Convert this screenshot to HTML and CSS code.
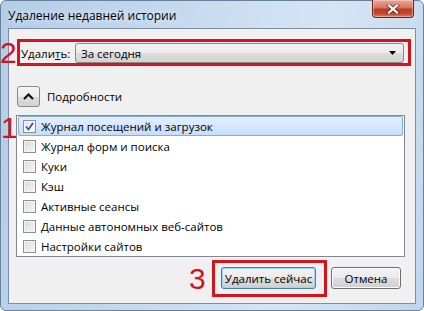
FILE: index.html
```html
<!DOCTYPE html>
<html lang="ru">
<head>
<meta charset="utf-8">
<title>Удаление недавней истории</title>
<link rel="stylesheet" href="styles.css">
</head>
<body>
<div class="window">
  <div class="titlebar">
    <span class="title">Удаление недавней истории</span>
    <div class="close">
      <svg width="14" height="10" viewBox="0 0 14 10">
        <path d="M3 1.5 L11 8.5 M11 1.5 L3 8.5" stroke="#3a1a14" stroke-width="4" stroke-linecap="square" opacity="0.55"/>
        <path d="M3 1.5 L11 8.5 M11 1.5 L3 8.5" stroke="#ffffff" stroke-width="2.2" stroke-linecap="square"/>
      </svg>
    </div>
  </div>
  <div class="client">
    <div class="range-row">
      <span class="range-label">Удали<u>т</u>ь:</span>
      <div class="select">
        <span>За сегодня</span>
        <svg class="arrow" width="7" height="4" viewBox="0 0 7 4"><path d="M0 0 H7 L3.5 4 Z" fill="#000"/></svg>
      </div>
    </div>
    <div class="details-row">
      <div class="chev">
        <svg width="11" height="7" viewBox="0 0 11 7"><path d="M1 6 L5.5 1.5 L10 6" fill="none" stroke="#111" stroke-width="2.2"/></svg>
      </div>
      <span class="details-label">Подробности</span>
    </div>
    <div class="list">
      <div class="item selected"><span class="cb checked"><svg width="9" height="9" viewBox="0 0 9 9"><path d="M1 4.5 L3.5 7.5 L8 1" fill="none" stroke="#3b4c6a" stroke-width="1.6"/></svg></span><span>Журнал посещений и загрузок</span></div>
      <div class="item"><span class="cb"></span><span>Журнал форм и поиска</span></div>
      <div class="item"><span class="cb"></span><span>Куки</span></div>
      <div class="item"><span class="cb"></span><span>Кэш</span></div>
      <div class="item"><span class="cb"></span><span>Активные сеансы</span></div>
      <div class="item"><span class="cb"></span><span>Данные автономных веб-сайтов</span></div>
      <div class="item"><span class="cb"></span><span>Настройки сайтов</span></div>
    </div>
    <div class="actions">
      <div class="btn default">Удалить сейчас</div>
      <div class="btn">Отмена</div>
    </div>
  </div>

  <div class="mark mark-box box2"></div>
  <div class="mark num num2">2</div>
  <div class="mark num num1">1</div>
  <div class="mark mark-box box3"></div>
  <div class="mark num num3">3</div>
</div>
</body>
</html>
```

FILE: styles.css
```css
html, body {
  margin: 0;
  padding: 0;
}
body {
  width: 424px;
  height: 311px;
  overflow: hidden;
  background: #ffffff;
  font-family: "Open Sans", "Noto Sans", "Liberation Sans", sans-serif;
  font-size: 11.5px;
  color: #000;
}
.window {
  position: relative;
  box-sizing: border-box;
  width: 424px;
  height: 311px;
  border: 1px solid #6a7f99;
  border-radius: 6px 6px 6px 6px;
  background: linear-gradient(100deg, #b3cde8 0%, #c6daef 40%, #d6e5f4 70%, #c0d6ed 100%);
  display: flex;
  flex-direction: column;
}
.titlebar {
  height: 27px;
  display: flex;
  align-items: flex-start;
  flex-shrink: 0;
}
.title {
  margin: 6px 0 0 7px;
  font-size: 12px;
  color: #000;
  text-shadow: 0 0 6px rgba(255,255,255,0.9);
}
.close {
  margin-left: auto;
  margin-right: 9px;
  margin-top: -1px;
  width: 42px;
  height: 18px;
  box-sizing: border-box;
  border: 1px solid #6b2418;
  border-top: none;
  border-radius: 0 0 4px 4px;
  background: linear-gradient(180deg, #e9a999 0%, #d9755f 45%, #c0391f 55%, #c4472c 80%, #d9806a 100%);
  box-shadow: inset 0 0 0 1px rgba(255,220,210,0.45);
  display: flex;
  align-items: center;
  justify-content: center;
}
.client {
  box-sizing: border-box;
  margin: 0 7px 6px 7px;
  height: 276px;
  border: 1px solid #7d8ea3;
  background: #f0f0f0;
  padding: 14px 10px 0 7px;
  display: flex;
  flex-direction: column;
}
.range-row {
  display: flex;
  align-items: center;
  height: 20px;
}
.range-label {
  width: 54px;
  padding-left: 5px;
  flex-shrink: 0;
}
.range-label u {
  text-decoration: underline;
}
.select {
  flex: 1;
  margin-right: 1px;
  height: 20px;
  box-sizing: border-box;
  border: 1px solid #8a8a8a;
  border-radius: 3px;
  background: linear-gradient(180deg, #f3f3f3 0%, #ebebeb 50%, #dcdcdc 51%, #d4d4d4 100%);
  display: flex;
  align-items: center;
  padding: 0 7px 0 5px;
}
.select .arrow {
  margin-left: auto;
}
.details-row {
  margin-top: 23px;
  display: flex;
  align-items: center;
  height: 21px;
}
.chev {
  margin-left: 1px;
  width: 23px;
  height: 21px;
  box-sizing: border-box;
  border: 1px solid #8a8a8a;
  border-radius: 3px;
  background: linear-gradient(180deg, #f4f4f4 0%, #ececec 50%, #dddddd 51%, #d2d2d2 100%);
  display: flex;
  align-items: center;
  justify-content: center;
}
.details-label {
  margin-left: 7px;
}
.list {
  margin-top: 8px;
  height: 142px;
  box-sizing: border-box;
  border: 1px solid #828790;
  background: #ffffff;
  display: flex;
  flex-direction: column;
}
.item {
  height: 20px;
  box-sizing: border-box;
  margin: 0 1px;
  border: 1px solid transparent;
  border-radius: 2px;
  display: flex;
  align-items: center;
  padding-left: 4px;
}
.item.selected {
  border-color: #84acdd;
  background: linear-gradient(180deg, #e4effd 0%, #d6e7fc 50%, #c6ddfb 100%);
}
.cb {
  width: 13px;
  height: 13px;
  box-sizing: border-box;
  border: 1px solid #8f8f8f;
  background: linear-gradient(135deg, #d8d8d8 0%, #ececec 60%, #f6f6f6 100%);
  box-shadow: inset 0 0 0 1px #f4f4f4;
  margin-right: 5px;
  display: flex;
  align-items: center;
  justify-content: center;
  flex-shrink: 0;
}
.cb.checked {
  background: linear-gradient(135deg, #dde4ee 0%, #eef2f7 60%, #f8f9fb 100%);
}
.actions {
  margin-top: 10px;
  display: flex;
  justify-content: flex-end;
  gap: 15px;
  padding-right: 4px;
}
.btn {
  height: 22px;
  box-sizing: border-box;
  border: 1px solid #707070;
  border-radius: 3px;
  background: linear-gradient(180deg, #f2f2f2 0%, #ebebeb 50%, #dddddd 51%, #cfcfcf 100%);
  box-shadow: inset 0 0 0 1px #fbfbfb;
  display: flex;
  align-items: center;
  justify-content: center;
  width: 70px;
}
.btn.default {
  width: 95px;
  border-color: #3c7fb1;
  box-shadow: inset 0 0 0 1px #9fd7f2;
}
.mark {
  position: absolute;
}
.mark-box {
  box-sizing: border-box;
  border: 3px solid #d3141c;
}
.box2 {
  left: 16px;
  top: 38px;
  width: 394px;
  height: 27px;
}
.box3 {
  left: 211px;
  top: 259px;
  width: 115px;
  height: 37px;
}
.num {
  font-family: "Liberation Sans", Arial, sans-serif;
  font-size: 30px;
  line-height: 30px;
  color: #d3141c;
}
.num2 {
  left: -1px;
  top: 37px;
}
.num1 {
  left: 0px;
  top: 112px;
}
.num3 {
  left: 188px;
  top: 263px;
}
```
